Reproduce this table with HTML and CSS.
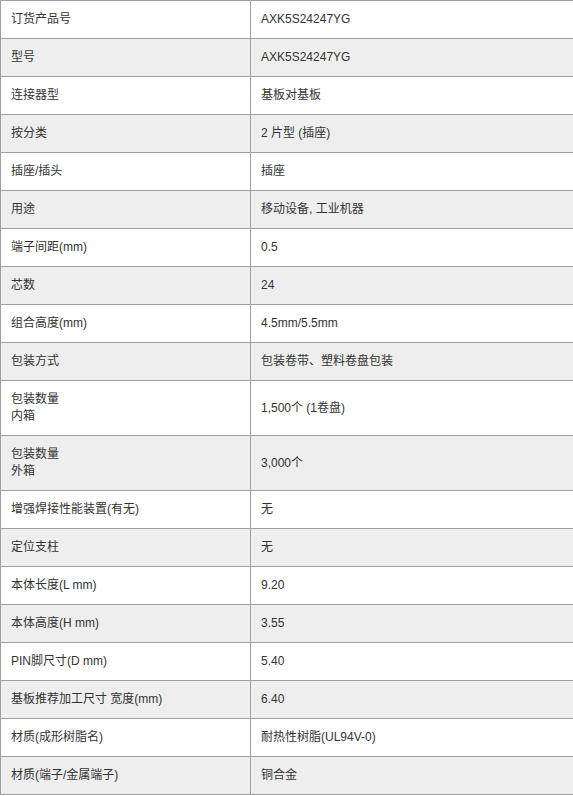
FILE: index.html
```html
<!DOCTYPE html>
<html lang="zh-CN">
<head>
<meta charset="utf-8">
<title>规格</title>
<link rel="stylesheet" href="styles.css">
</head>
<body>
<table class="spec">
<tbody>
<tr><th>订货产品号</th><td>AXK5S24247YG</td></tr>
<tr><th>型号</th><td>AXK5S24247YG</td></tr>
<tr><th>连接器型</th><td>基板对基板</td></tr>
<tr><th>按分类</th><td>2 片型 (插座)</td></tr>
<tr><th>插座/插头</th><td>插座</td></tr>
<tr><th>用途</th><td>移动设备, 工业机器</td></tr>
<tr><th>端子间距(mm)</th><td>0.5</td></tr>
<tr><th>芯数</th><td>24</td></tr>
<tr><th>组合高度(mm)</th><td>4.5mm/5.5mm</td></tr>
<tr><th>包装方式</th><td>包装卷带、塑料卷盘包装</td></tr>
<tr><th>包装数量<br>内箱</th><td>1,500个 (1卷盘)</td></tr>
<tr><th>包装数量<br>外箱</th><td>3,000个</td></tr>
<tr><th>增强焊接性能装置(有无)</th><td>无</td></tr>
<tr><th>定位支柱</th><td>无</td></tr>
<tr><th>本体长度(L mm)</th><td>9.20</td></tr>
<tr><th>本体高度(H mm)</th><td>3.55</td></tr>
<tr><th>PIN脚尺寸(D mm)</th><td>5.40</td></tr>
<tr><th>基板推荐加工尺寸 宽度(mm)</th><td>6.40</td></tr>
<tr><th>材质(成形树脂名)</th><td>耐热性树脂(UL94V-0)</td></tr>
<tr><th>材质(端子/金属端子)</th><td>铜合金</td></tr>
</tbody>
</table>
</body>
</html>
```
FILE: styles.css
```css
html, body {
  margin: 0;
  padding: 0;
  background: #fff;
  overflow: hidden;
}
body {
  font-family: "Liberation Sans", "Noto Sans CJK SC", sans-serif;
  font-size: 12px;
  color: #333;
}
.spec {
  border-collapse: collapse;
  width: 575px;
  table-layout: fixed;
}
.spec th,
.spec td {
  border: 1px solid #a0a0a0;
  padding: 10px 10px 10px 10px;
  line-height: 17px;
  text-align: left;
  font-weight: normal;
  vertical-align: middle;
}
.spec th {
  width: 229px;
}
.spec tr:nth-child(even) th,
.spec tr:nth-child(even) td {
  background: #eee;
}
```
